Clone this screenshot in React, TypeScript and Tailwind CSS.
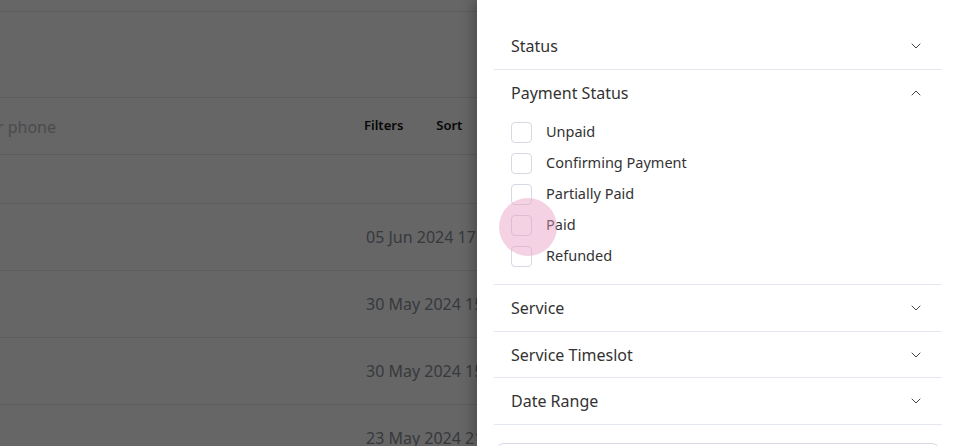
import { ChevronDown, ChevronUp } from 'lucide-react';

const ROWS = ['05 Jun 2024 17:42', '30 May 2024 15:18', '30 May 2024 15:02', '23 May 2024 21:37'];

const PAYMENT_OPTIONS = ['Unpaid', 'Confirming Payment', 'Partially Paid', 'Paid', 'Refunded'];

function FilterSection({ title, open = false, children }: { title: string; open?: boolean; children?: React.ReactNode }) {
  return (
    <div className="border-b border-[#e3e7ee]">
      <div className="flex h-[45.5px] items-center justify-between pt-[1px] pl-[17px] pr-[18px]">
        <span className="text-[16px] text-[#333]">{title}</span>
        {open ? (
          <ChevronUp size={16} strokeWidth={1.5} className="text-[#444]" />
        ) : (
          <ChevronDown size={16} strokeWidth={1.5} className="text-[#444]" />
        )}
      </div>
      {children}
    </div>
  );
}

export default function App() {
  return (
    <div className="relative h-[446px] w-[960px] overflow-hidden bg-white font-['Noto_Sans',sans-serif]">
      {/* Orders page underneath */}
      <div className="flex flex-col">
        <div className="h-[12px] border-b border-[#e5e7eb]" />
        <div className="h-[86px] border-b border-[#e5e7eb]" />
        <div className="flex h-[57px] items-center border-b border-[#e5e7eb]">
          <div className="flex w-[56px] justify-end whitespace-nowrap pt-[2px] text-[16px] text-[#b8bcc4]">
            Search by name, email or phone
          </div>
          <div className="ml-[308px] flex items-center gap-[33px] text-[13px] font-semibold text-[#111]">
            <span>Filters</span>
            <span>Sort</span>
          </div>
        </div>
        <div className="h-[49px] border-b border-[#e5e7eb]" />
        {ROWS.map((date) => (
          <div key={date} className="flex h-[67px] items-center border-b border-[#e5e7eb] pl-[366px]">
            <span className="whitespace-nowrap text-[16px] text-[#8a8f98]">{date}</span>
          </div>
        ))}
      </div>

      {/* Backdrop */}
      <div className="absolute inset-0 bg-black/60" />

      {/* Filter drawer */}
      <aside className="absolute top-0 right-0 bottom-0 w-[483px] bg-white pt-[23px] pl-[17px] pr-[18px] shadow-[-4px_0_12px_rgba(0,0,0,0.25)]">
        <FilterSection title="Status" />
        <FilterSection title="Payment Status" open>
          <div className="flex flex-col pt-[1.5px] pb-[12.5px] pl-[17px]">
            {PAYMENT_OPTIONS.map((opt) => (
              <label key={opt} className="flex h-[31px] items-center gap-[14px]">
                <span className="h-[21px] w-[21px] rounded-[4px] border border-[#d5dae2] bg-white" />
                <span className="text-[14.5px] text-[#333]">{opt}</span>
              </label>
            ))}
          </div>
        </FilterSection>
        <FilterSection title="Service" />
        <FilterSection title="Service Timeslot" />
        <FilterSection title="Date Range" />
        <div className="mx-[2px] mt-[18px] h-[40px] rounded-[8px] border border-[#d5dae2]" />

        {/* Click indicator */}
        <div className="absolute top-[198px] left-[22px] h-[58px] w-[58px] rounded-full bg-[#e79cc1]/45" />
      </aside>
    </div>
  );
}
